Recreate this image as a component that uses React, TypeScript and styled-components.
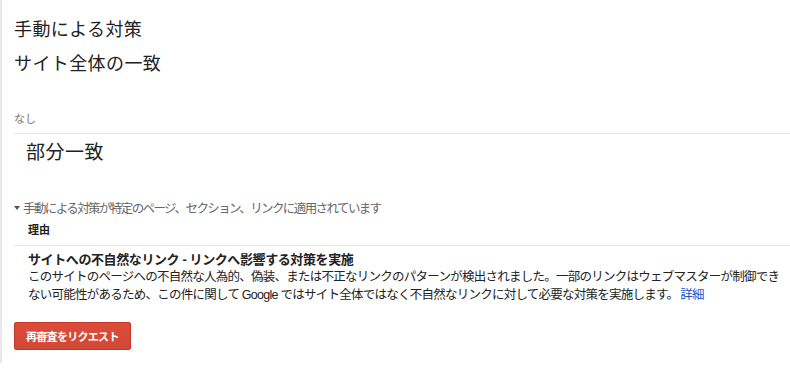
import styled, { createGlobalStyle } from "styled-components";

const GlobalStyle = createGlobalStyle`
    html, body {
        margin: 0;
        padding: 0;
        background: #fff;
    }
    body {
        font-family: "Liberation Sans", "Noto Sans CJK JP", sans-serif;
        color: #222;
    }
`;

export default function App() {
    return (
        <>
            <GlobalStyle />
            <Page>
                <Header>
                    <Title>手動による対策</Title>
                    <Title>サイト全体の一致</Title>
                </Header>

                <SectionNote>なし</SectionNote>

                <SubTitle>部分一致</SubTitle>

                <Expander>
                    <Caret />
                    手動による対策が特定のページ、セクション、リンクに適用されています
                </Expander>

                <Table>
                    <HeadRow>
                        <HeadCell>理由</HeadCell>
                    </HeadRow>
                    <Row>
                        <ReasonTitle>サイトへの不自然なリンク - リンクへ影響する対策を実施</ReasonTitle>
                        <ReasonText>
                            このサイトのページへの不自然な人為的、偽装、または不正なリンクのパターンが検出されました。一部のリンクはウェブマスターが制御できない可能性があるため、この件に関して Google ではサイト全体ではなく不自然なリンクに対して必要な対策を実施します。<DetailLink href="#">詳細</DetailLink>
                        </ReasonText>
                    </Row>
                </Table>

                <Footer>
                    <RequestButton type="button">再審査をリクエスト</RequestButton>
                </Footer>
            </Page>
        </>
    );
}

/* -------------------- Styled Components -------------------- */

const Page = styled.div`
    border-left: 2px solid #e8e8e8;
    padding-left: 12px;
    height: 363px;
    box-sizing: border-box;
`;

const Header = styled.div`
    padding-top: 11px;
`;

const Title = styled.div`
    font-family: "Noto Sans CJK JP", sans-serif;
    font-size: 18px;
    line-height: 34px;
    letter-spacing: 0.4px;
    color: #222;
`;

const SectionNote = styled.div`
    margin-top: 31px;
    padding-bottom: 7px;
    border-bottom: 1px solid #e5e5e5;
    font-family: "Noto Sans CJK JP", sans-serif;
    font-size: 11px;
    line-height: 16px;
    color: #777;
`;

const SubTitle = styled.div`
    margin-top: 3px;
    padding-left: 12px;
    font-family: "Noto Sans CJK JP", sans-serif;
    font-size: 19px;
    line-height: 28px;
    letter-spacing: 0.5px;
    color: #222;
`;

const Expander = styled.div`
    margin-top: 34px;
    display: flex;
    align-items: center;
    font-family: "Noto Sans CJK JP", sans-serif;
    font-size: 12.5px;
    line-height: 18px;
    letter-spacing: -1.6px;
    color: #666;
`;

const Caret = styled.span`
    width: 0;
    height: 0;
    margin-right: 3px;
    border-left: 3.5px solid transparent;
    border-right: 3.5px solid transparent;
    border-top: 4px solid #555;
`;

const Table = styled.div`
    margin-top: 2px;
`;

const HeadRow = styled.div`
    padding: 2px 0 8px 14px;
    border-bottom: 1px solid #e5e5e5;
`;

const HeadCell = styled.div`
    font-family: "Noto Sans CJK JP", sans-serif;
    font-weight: 700;
    font-size: 11px;
    line-height: 16px;
    color: #222;
`;

const Row = styled.div`
    padding: 6px 0 0 14px;
`;

const ReasonTitle = styled.div`
    font-family: "Liberation Sans", "Noto Sans CJK JP", sans-serif;
    font-weight: 700;
    font-size: 13px;
    line-height: 16px;
    letter-spacing: -0.4px;
    color: #222;
`;

const ReasonText = styled.div`
    font-family: "Liberation Sans", "Noto Sans CJK JP", sans-serif;
    font-size: 12.5px;
    line-height: 18px;
    letter-spacing: -0.75px;
    color: #222;
`;

const DetailLink = styled.a`
    margin-left: 2px;
    color: #15c;
    text-decoration: none;
`;

const Footer = styled.div`
    margin-top: 18px;
    padding-bottom: 14px;
    border-bottom: 1px solid #e5e5e5;
`;

const RequestButton = styled.button`
    display: inline-flex;
    align-items: center;
    height: 28px;
    padding: 0 11px;
    border: 1px solid #c53727;
    border-radius: 2px;
    background: linear-gradient(#dd4b39, #d14836);
    color: #fff;
    font-family: "Noto Sans CJK JP", sans-serif;
    font-weight: 700;
    font-size: 11px;
    letter-spacing: -0.7px;
    cursor: pointer;
`;
